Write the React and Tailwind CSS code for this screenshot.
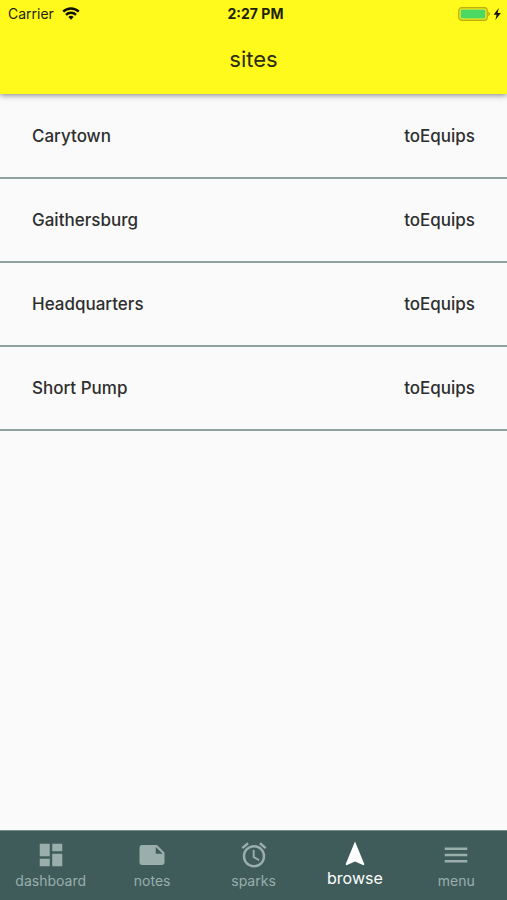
import React from 'react';
import { MdDashboard, MdNote, MdAccessAlarm, MdNavigation, MdMenu } from 'react-icons/md';

const sites = ['Carytown', 'Gaithersburg', 'Headquarters', 'Short Pump'];

const tabs = [
    { label: 'dashboard', icon: MdDashboard },
    { label: 'notes', icon: MdNote },
    { label: 'sparks', icon: MdAccessAlarm },
    { label: 'browse', icon: MdNavigation, active: true },
    { label: 'menu', icon: MdMenu },
];

const WifiIcon = () => (
    <svg width="18" height="14" viewBox="0 0 18 14" fill="none" stroke="#111100" strokeWidth="2.4">
        <path d="M1.2 4.7a11 11 0 0 1 15.6 0" />
        <path d="M4 7.8a7 7 0 0 1 10 0" />
        <path d="M9 12.8 6.3 10.1a3.8 3.8 0 0 1 5.4 0z" fill="#111100" stroke="none" />
    </svg>
);

const BatteryIcon = () => (
    <svg width="45" height="14" viewBox="0 0 45 14">
        <rect x="0.8" y="0.8" width="28.4" height="12.4" rx="3" fill="none" stroke="#bfae12" strokeWidth="1.4" />
        <rect x="2.6" y="2.4" width="24.8" height="9.2" rx="1.2" fill="#4bd863" />
        <path d="M30.4 4.8c1.8.6 1.8 3.8 0 4.4z" fill="#a89a10" />
        <path d="M40.8 1 35.6 7.8h3L37.4 13l5.4-7h-3.2z" fill="#111100" />
    </svg>
);

const StatusBar = () => (
    <div className="grid grid-cols-3 items-center h-7 pl-2 pr-1 text-[#1f1f0a]">
        <div className="flex items-center gap-2 text-sm">
            <span>Carrier</span>
            <WifiIcon />
        </div>
        <div className="text-center text-sm font-bold">2:27 PM</div>
        <div className="flex justify-end">
            <BatteryIcon />
        </div>
    </div>
);

const Header = () => (
    <header className="relative bg-[#fff91c] pb-4 shadow-[0_1px_6px_rgba(0,0,0,0.5)]">
        <StatusBar />
        <h1 className="pt-4 pb-1 text-center text-[22px] leading-[30px] text-[#2b2b10]">sites</h1>
    </header>
);

const SiteRow = ({ name }) => (
    <li className="flex items-center justify-between px-8 py-7 border-b-2 border-[#8fa19e] text-[17px] leading-[26px] font-medium text-[#2e2e2e]">
        <span>{name}</span>
        <a href="#equips">toEquips</a>
    </li>
);

const TabBar = () => (
    <nav className="flex bg-[#3f5c5a] border-t border-[#758d8a] h-[70px]">
        {tabs.map(({ label, icon: Icon, active }) => (
            <button
                key={label}
                type="button"
                className={`flex-1 flex flex-col items-center ${active ? 'pt-2 text-white text-base' : 'pt-[9px] text-[#9aaeac] text-sm'}`}
            >
                <Icon size={30} />
                <span className={active ? 'leading-[18px]' : 'leading-[22px]'}>{label}</span>
            </button>
        ))}
    </nav>
);

const App = () => {
    return (
        <div className="min-h-screen flex flex-col bg-[#fafafa] font-['Inter',sans-serif]">
            <Header />
            <main className="flex-1 pt-px">
                <ul>
                    {sites.map((name) => (
                        <SiteRow key={name} name={name} />
                    ))}
                </ul>
            </main>
            <TabBar />
        </div>
    );
};

export default App;
